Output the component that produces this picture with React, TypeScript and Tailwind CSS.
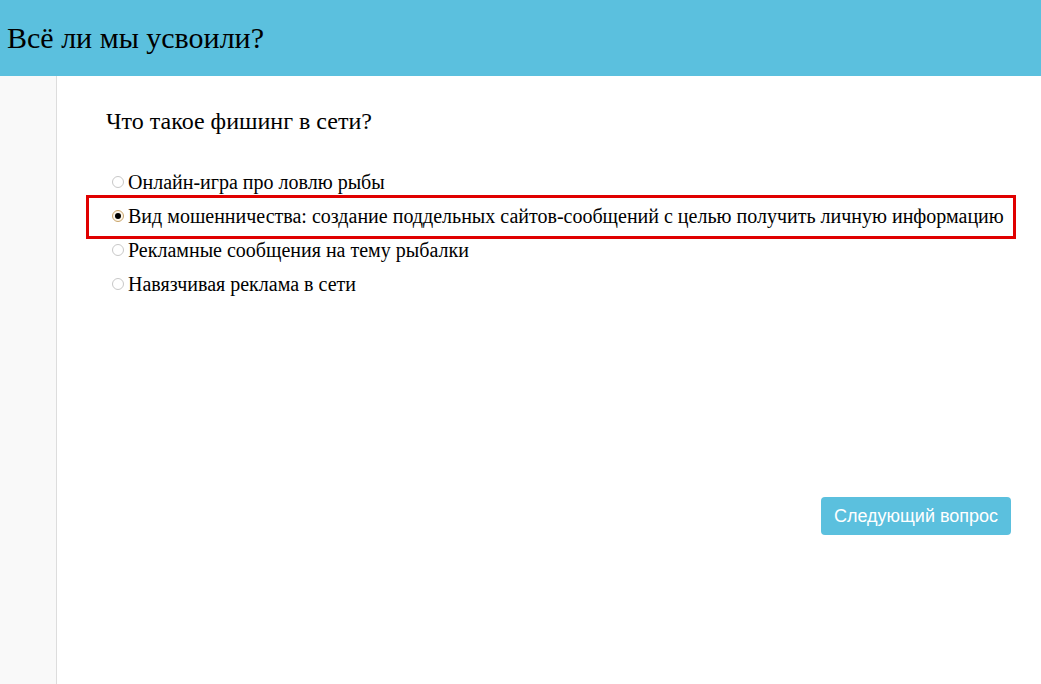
import { useState } from 'react';

const options = [
  'Онлайн-игра про ловлю рыбы',
  'Вид мошенничества: создание поддельных сайтов-сообщений с целью получить личную информацию',
  'Рекламные сообщения на тему рыбалки',
  'Навязчивая реклама в сети',
];

function Radio({ checked }: { checked: boolean }) {
  return (
    <span
      className={`inline-flex items-center justify-center w-[12px] h-[12px] rounded-full border mr-[4px] shrink-0 ${
        checked ? 'border-[#c9a46a] bg-[#fdf6ea]' : 'border-[#c8c8c8] bg-white'
      }`}
    >
      {checked && <span className="w-[6px] h-[6px] rounded-full bg-black" />}
    </span>
  );
}

export default function App() {
  const [selected, setSelected] = useState(1);

  return (
    <div className="w-[1041px] h-[684px] flex flex-col bg-white overflow-hidden font-['Liberation_Serif',serif] text-black">
      {/* Header */}
      <header className="h-[76px] bg-[#5bc0de] flex items-center px-[7px] shrink-0">
        <h1 className="text-[30px] leading-none">Всё ли мы усвоили?</h1>
      </header>

      <div className="flex flex-1">
        {/* Sidebar */}
        <aside className="w-[57px] bg-[#f9f9f9] border-r border-[#dddddd] shrink-0" />

        {/* Main */}
        <main className="flex-1 flex flex-col pl-[49px] pr-[30px] pt-[31px]">
          <h2 className="text-[24px] leading-[28px]">Что такое фишинг в сети?</h2>

          <div className="relative mt-[30px] ml-[6px] flex flex-col">
            {options.map((opt, i) => (
              <label
                key={opt}
                onClick={() => setSelected(i)}
                className="flex items-center h-[34px] text-[20px] cursor-pointer"
              >
                <Radio checked={selected === i} />
                <span>{opt}</span>
              </label>
            ))}
            {/* highlight frame */}
            <div className="absolute left-[-26px] top-[30px] w-[930px] h-[44px] border-[3px] border-[#e00000] pointer-events-none" />
          </div>

          <div className="flex justify-end mt-[196px]">
            <button className="h-[38px] w-[190px] rounded-[4px] bg-[#5bc0de] text-white text-[18px] font-['Liberation_Sans',sans-serif]">
              Следующий вопрос
            </button>
          </div>
        </main>
      </div>
    </div>
  );
}
